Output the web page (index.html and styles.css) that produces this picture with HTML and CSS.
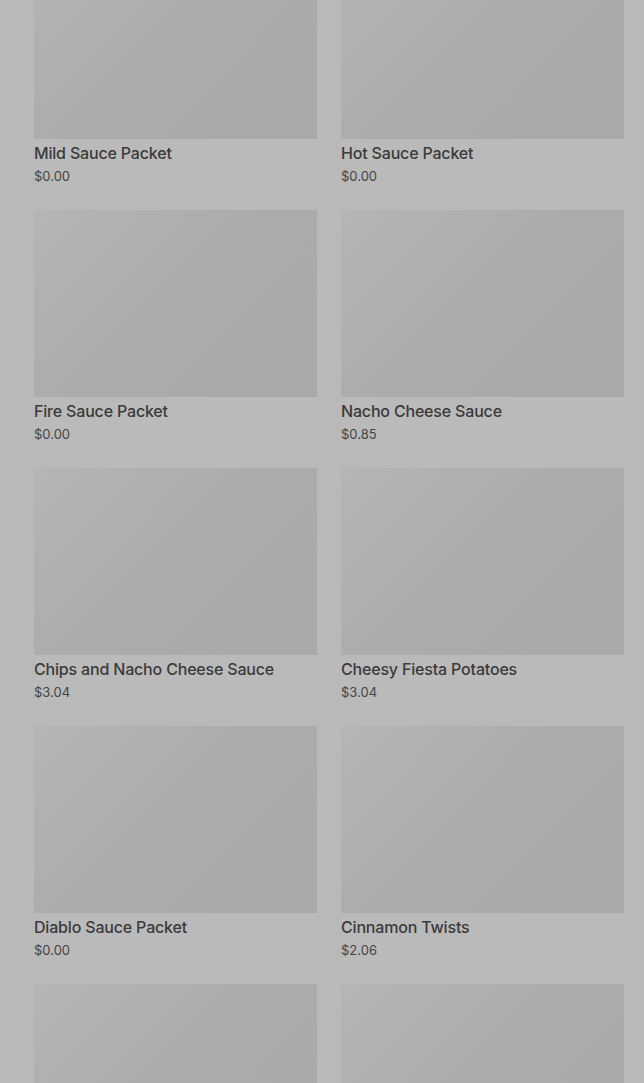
FILE: index.html
```html
<!DOCTYPE html>
<html lang="en">
<head>
    <meta charset="UTF-8">
    <meta name="viewport" content="width=device-width, initial-scale=1.0">
    <title>Menu</title>
    <link rel="stylesheet" href="styles.css">
</head>
<body>
    <div class="product-grid">
        <div class="product">
            <div class="product-image"></div>
            <div class="product-name">Mild Sauce Packet</div>
            <div class="product-price">$0.00</div>
        </div>
        <div class="product">
            <div class="product-image"></div>
            <div class="product-name">Hot Sauce Packet</div>
            <div class="product-price">$0.00</div>
        </div>
        <div class="product">
            <div class="product-image"></div>
            <div class="product-name">Fire Sauce Packet</div>
            <div class="product-price">$0.00</div>
        </div>
        <div class="product">
            <div class="product-image"></div>
            <div class="product-name">Nacho Cheese Sauce</div>
            <div class="product-price">$0.85</div>
        </div>
        <div class="product">
            <div class="product-image"></div>
            <div class="product-name">Chips and Nacho Cheese Sauce</div>
            <div class="product-price">$3.04</div>
        </div>
        <div class="product">
            <div class="product-image"></div>
            <div class="product-name">Cheesy Fiesta Potatoes</div>
            <div class="product-price">$3.04</div>
        </div>
        <div class="product">
            <div class="product-image"></div>
            <div class="product-name">Diablo Sauce Packet</div>
            <div class="product-price">$0.00</div>
        </div>
        <div class="product">
            <div class="product-image"></div>
            <div class="product-name">Cinnamon Twists</div>
            <div class="product-price">$2.06</div>
        </div>
        <div class="product">
            <div class="product-image"></div>
        </div>
        <div class="product">
            <div class="product-image"></div>
        </div>
    </div>
</body>
</html>
```

FILE: styles.css
```css
html, body {
    margin: 0;
    padding: 0;
    background-color: #b9b9b9;
    overflow: hidden;
}
body {
    font-family: Inter, "Noto Sans", sans-serif;
    color: #3a3a3a;
    height: 1083px;
}
.product-grid {
    display: grid;
    grid-template-columns: 283px 283px;
    column-gap: 24px;
    row-gap: 24px;
    padding: 0 20px 0 34px;
    margin-top: -48px;
}
.product {
    display: flex;
    flex-direction: column;
    height: 234px;
    background-color: #bababa;
}
.product-image {
    height: 187px;
    background: linear-gradient(135deg, #b5b5b5 0%, #ababab 50%, #a9a9a9 100%);
}
.product-name {
    font-size: 16px;
    line-height: 20px;
    margin-top: 4px;
    font-weight: 500;
    letter-spacing: -0.18px;
}
.product-price {
    font-size: 13px;
    line-height: 18px;
    margin-top: 4px;
    color: #444;
}
```
